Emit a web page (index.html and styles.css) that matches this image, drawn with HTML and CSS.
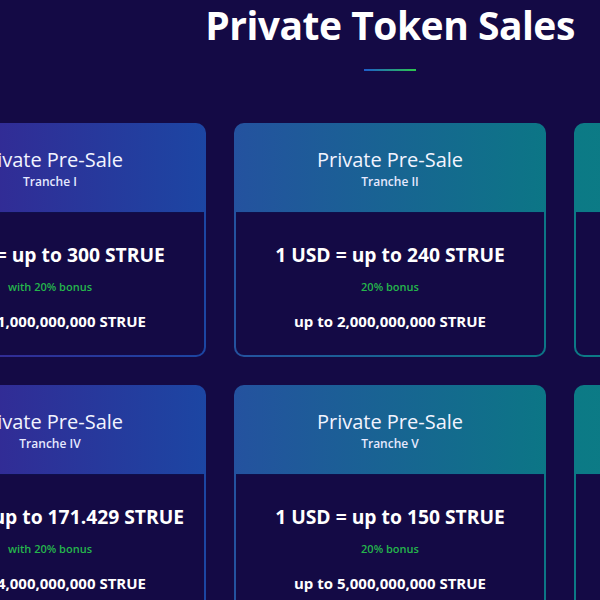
FILE: index.html
```html
<!DOCTYPE html>
<html lang="en">
<head>
    <meta charset="UTF-8">
    <meta name="viewport" content="width=device-width, initial-scale=1.0">
    <title>Private Token Sales</title>
    <link rel="stylesheet" href="styles.css">
</head>
<body>
    <section class="sales">
        <h1>Private Token Sales</h1>
        <div class="divider"></div>

        <div class="grid">
            <div class="card card-blue">
                <div class="card-head">
                    <h2>Private Pre-Sale</h2>
                    <span>Tranche I</span>
                </div>
                <div class="card-body">
                    <p class="rate">1 USD = up to 300 STRUE</p>
                    <p class="bonus">with 20% bonus</p>
                    <p class="cap">up to 1,000,000,000 STRUE</p>
                </div>
            </div>

            <div class="card card-mid">
                <div class="card-head">
                    <h2>Private Pre-Sale</h2>
                    <span>Tranche II</span>
                </div>
                <div class="card-body">
                    <p class="rate">1 USD = up to 240 STRUE</p>
                    <p class="bonus">20% bonus</p>
                    <p class="cap">up to 2,000,000,000 STRUE</p>
                </div>
            </div>

            <div class="card card-teal">
                <div class="card-head">
                    <h2>Private Pre-Sale</h2>
                    <span>Tranche III</span>
                </div>
                <div class="card-body">
                    <p class="rate">1 USD = up to 200 STRUE</p>
                    <p class="bonus">20% bonus</p>
                    <p class="cap">up to 3,000,000,000 STRUE</p>
                </div>
            </div>

            <div class="card card-blue">
                <div class="card-head">
                    <h2>Private Pre-Sale</h2>
                    <span>Tranche IV</span>
                </div>
                <div class="card-body">
                    <p class="rate">1 USD = up to 171.429 STRUE</p>
                    <p class="bonus">with 20% bonus</p>
                    <p class="cap">up to 4,000,000,000 STRUE</p>
                </div>
            </div>

            <div class="card card-mid">
                <div class="card-head">
                    <h2>Private Pre-Sale</h2>
                    <span>Tranche V</span>
                </div>
                <div class="card-body">
                    <p class="rate">1 USD = up to 150 STRUE</p>
                    <p class="bonus">20% bonus</p>
                    <p class="cap">up to 5,000,000,000 STRUE</p>
                </div>
            </div>

            <div class="card card-teal">
                <div class="card-head">
                    <h2>Private Pre-Sale</h2>
                    <span>Tranche VI</span>
                </div>
                <div class="card-body">
                    <p class="rate">1 USD = up to 133 STRUE</p>
                    <p class="bonus">20% bonus</p>
                    <p class="cap">up to 6,000,000,000 STRUE</p>
                </div>
            </div>
        </div>
    </section>
</body>
</html>
```

FILE: styles.css
```css
body {
    font-family: "Open Sans", Arial, sans-serif;
    background-color: #140a45;
    color: #fff;
    margin: 0;
    padding: 0;
    overflow: hidden;
}

.sales {
    width: 992px;
    margin-left: -106px;
}

h1 {
    text-align: center;
    font-size: 39px;
    font-weight: 700;
    line-height: 50px;
    letter-spacing: -0.5px;
    margin: 0;
}

.divider {
    width: 52px;
    height: 2px;
    margin: 19px auto 52px;
    background: linear-gradient(to right, #1e5ccc, #2cc84c);
}

.grid {
    display: grid;
    grid-template-columns: repeat(3, 312px);
    gap: 28px;
}

.card {
    padding: 2px;
    border-radius: 10px;
    height: 234px;
    box-sizing: border-box;
    display: flex;
    flex-direction: column;
}

.card-blue {
    background: linear-gradient(to right, #3c1f8f, #1c46a3);
}

.card-mid {
    background: linear-gradient(to right, #24529f, #0c7686);
}

.card-teal {
    background: linear-gradient(to right, #0c7a86, #0a8282);
}

.card-head {
    height: 87px;
    text-align: center;
    padding-top: 22px;
    box-sizing: border-box;
}

.card-head h2 {
    font-size: 20px;
    font-weight: 400;
    line-height: 26px;
    margin: 0;
    color: #f2f4ff;
}

.card-head span {
    display: block;
    font-size: 12px;
    font-weight: 600;
    line-height: 16px;
    margin-top: 1px;
    color: #e6e9ff;
}

.card-body {
    flex: 1;
    background-color: #140a45;
    border-radius: 0 0 8px 8px;
    border-top: 1px solid rgba(10, 20, 80, 0.5);
    text-align: center;
    padding-top: 29px;
}

.card-body p {
    margin: 0;
}

.rate {
    font-size: 19.3px;
    font-weight: 700;
    line-height: 26px;
}

.bonus {
    font-size: 11px;
    font-weight: 600;
    color: #25b64c;
    line-height: 16px;
    margin-top: 11px !important;
}

.cap {
    font-size: 15px;
    font-weight: 700;
    line-height: 20px;
    margin-top: 16px !important;
}
```
